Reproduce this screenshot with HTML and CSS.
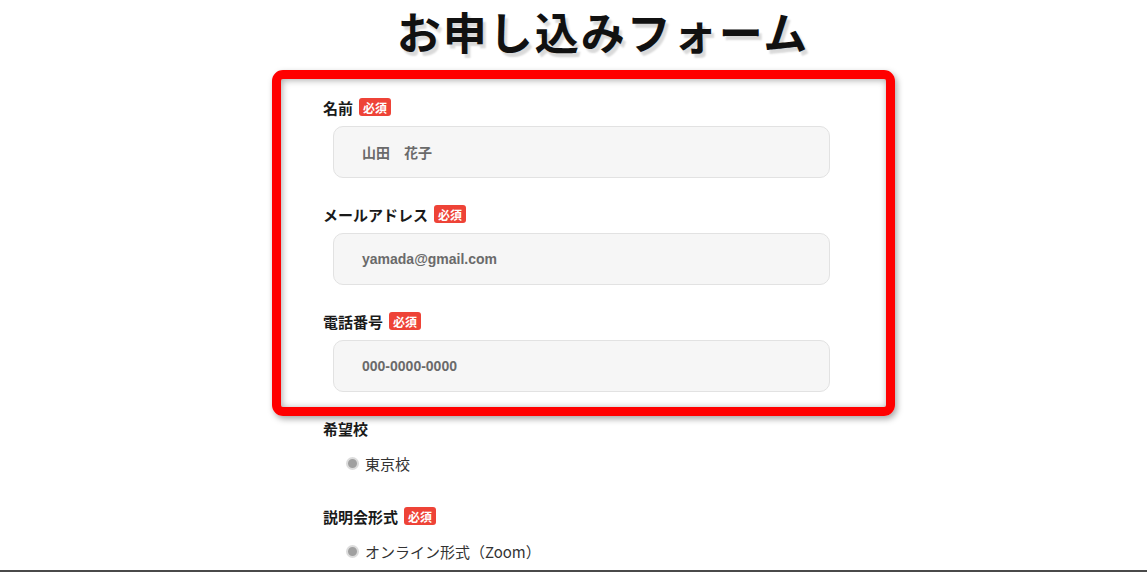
FILE: index.html
```html
<!DOCTYPE html>
<html lang="ja">
<head>
<meta charset="utf-8">
<title>お申し込みフォーム</title>
<link rel="stylesheet" href="styles.css">
</head>
<body>
<div class="page">
  <h1 class="title">お申し込みフォーム</h1>
  <form class="form">
    <div class="highlight" aria-hidden="true"></div>
    <div class="field">
      <div class="label-row"><span class="label">名前</span><span class="badge">必須</span></div>
      <div class="input">山田　花子</div>
    </div>
    <div class="field">
      <div class="label-row"><span class="label">メールアドレス</span><span class="badge">必須</span></div>
      <div class="input">yamada@gmail.com</div>
    </div>
    <div class="field">
      <div class="label-row"><span class="label">電話番号</span><span class="badge">必須</span></div>
      <div class="input">000-0000-0000</div>
    </div>
    <div class="field field-radio">
      <div class="label-row"><span class="label">希望校</span></div>
      <div class="radio-row"><span class="radio"></span><span class="radio-text">東京校</span></div>
    </div>
    <div class="field field-radio">
      <div class="label-row"><span class="label">説明会形式</span><span class="badge">必須</span></div>
      <div class="radio-row"><span class="radio"></span><span class="radio-text">オンライン形式（Zoom）</span></div>
    </div>
  </form>
</div>
</body>
</html>
```

FILE: styles.css
```css
html, body {
  margin: 0;
  padding: 0;
  background: #ffffff;
}

body {
  font-family: "Noto Sans CJK JP", "Liberation Sans", sans-serif;
  color: #222;
}

.page {
  height: 570px;
  overflow: hidden;
  border-bottom: 2px solid #4a4a4a;
}

.title {
  margin: 0;
  line-height: 62px;
  padding-left: 59px;
  text-align: center;
  font-size: 44px;
  font-weight: 700;
  letter-spacing: 2px;
  color: #111;
  text-shadow: 3px 4px 2px rgba(0, 0, 0, 0.15);
}

.form {
  position: relative;
  margin-left: 323px;
  width: 520px;
  padding-top: 37px;
}

.highlight {
  position: absolute;
  left: -51px;
  top: 8px;
  width: 605px;
  height: 328px;
  border: 9px solid #ff0000;
  border-radius: 11px;
  box-shadow: 2px 3px 6px rgba(0, 0, 0, 0.35), inset 1px 1px 7px rgba(0, 0, 0, 0.35);
  pointer-events: none;
}

.field {
  margin-bottom: 28px;
}

.label-row {
  display: flex;
  align-items: center;
  height: 16px;
  margin-bottom: 11px;
}

.label {
  font-size: 15px;
  font-weight: 700;
  color: #1a1a1a;
}

.badge {
  margin-left: 6px;
  height: 18px;
  line-height: 19px;
  padding: 0 4px;
  border-radius: 3px;
  background: #ee4337;
  color: #fff;
  font-size: 12px;
  font-weight: 700;
}

.input {
  box-sizing: border-box;
  margin-left: 10px;
  width: 497px;
  height: 52px;
  padding-left: 28px;
  display: flex;
  align-items: center;
  background: #f6f6f6;
  border: 1px solid #e2e2e2;
  border-radius: 10px;
  font-family: "Liberation Sans", "Noto Sans CJK JP", sans-serif;
  font-size: 14px;
  font-weight: 700;
  color: #6a6a6a;
}

.field-radio .label-row {
  margin-bottom: 17px;
}

.field-radio {
  margin-bottom: 35px;
}

.radio-row {
  display: flex;
  align-items: center;
  height: 20px;
  margin-left: 23px;
}

.radio {
  box-sizing: border-box;
  width: 13px;
  height: 13px;
  border-radius: 50%;
  background: #a0a0a0;
  border: 2px solid #dcdcdc;
  margin-right: 6px;
}

.radio-text {
  font-size: 15px;
  color: #333;
}
```
